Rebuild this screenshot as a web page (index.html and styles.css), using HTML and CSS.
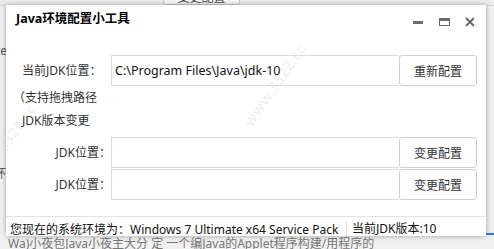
FILE: index.html
```html
<!DOCTYPE html>
<html lang="zh-CN">
<head>
<meta charset="utf-8">
<title>Java环境配置小工具</title>
<link rel="stylesheet" href="styles.css">
</head>
<body>
<div class="desktop">
  <div class="bg-top">
    <span class="bg-btn">变更配置</span>
  </div>
  <div class="bg-left1">te</div>
  <div class="bg-left2">环</div>
  <div class="bg-bottom">Wa)小夜包Java小夜主大分 定 一个编Java的Applet程序构建/用程序的</div>
  <div class="bg-blue"></div>

  <div class="dialog">
    <div class="titlebar">
      <span class="title">Java环境配置小工具</span>
      <div class="controls">
        <span class="ctl ctl-min"></span>
        <span class="ctl ctl-max"></span>
        <svg class="ctl-close" width="10" height="10" viewBox="0 0 10 10"><path d="M1 1L9 9M9 1L1 9" stroke="#6b6b6b" stroke-width="2" fill="none"/></svg>
      </div>
    </div>
    <div class="body">
      <div class="row">
        <span class="label label-left">当前JDK位置<span class="colon">：</span></span>
        <div class="input">C:\Program Files\Java\jdk-10</div>
        <button class="btn">重新配置</button>
      </div>
      <div class="note note1">（支持拖拽路径</div>
      <div class="note note2">JDK版本变更</div>
      <div class="rows2">
        <div class="row">
          <span class="label label-right">JDK位置<span class="colon">：</span></span>
          <div class="input"></div>
          <button class="btn">变更配置</button>
        </div>
        <div class="row">
          <span class="label label-right">JDK位置<span class="colon">：</span></span>
          <div class="input"></div>
          <button class="btn">变更配置</button>
        </div>
      </div>
    </div>
    <div class="status">
      <span class="seg seg1">您现在的系统环境为<span class="colon">：</span>Windows 7 Ultimate x64 Service Pack</span>
      <span class="seg seg2">当前JDK版本:10</span>
    </div>
    <div class="wm wm1">www.3322.cc</div>
    <div class="wm wm2">www.3322.cc</div>
  </div>
</div>
</body>
</html>
```
FILE: styles.css
```css
* { box-sizing: border-box; }
html, body { margin: 0; padding: 0; }
body {
  width: 494px;
  height: 249px;
  overflow: hidden;
  background: #f0f0f0;
  font-family: "Noto Sans", "Noto Sans CJK SC", sans-serif;
  font-size: 12px;
  color: #333;
}
.desktop { position: relative; width: 494px; height: 249px; overflow: hidden; }
.bg-top {
  height: 6px;
  border-bottom: 1px solid #d6d6d6;
  background: #ececec;
  position: relative;
}
.bg-btn {
  position: absolute;
  left: 163px; top: -10px;
  width: 77px; height: 15px;
  border: 1px solid #c8c8c8;
  border-radius: 3px;
  background: #f7f7f7;
  text-align: center;
  line-height: 14px;
  font-size: 12px;
  color: #444;
  overflow: hidden;
}
.bg-left1 { position: absolute; left: -4px; top: 42px; font-size: 12px; color: #555; }
.bg-left2 { position: absolute; left: -6px; top: 164px; font-size: 12px; color: #555; }
.bg-bottom { position: absolute; left: 8px; top: 237px; font-size: 12px; line-height: 14px; color: #777; white-space: nowrap; }
.bg-blue { position: absolute; left: 486px; top: 233px; width: 8px; height: 2px; background: #2f7fd0; }

.dialog {
  position: absolute;
  left: 6px; top: 5px;
  width: 480px; height: 231px;
  background: #fff;
  box-shadow: 0 0 5px rgba(0,0,0,0.35);
  display: flex;
  flex-direction: column;
  overflow: hidden;
}
.titlebar {
  height: 27px;
  flex: none;
  display: flex;
  align-items: center;
  justify-content: space-between;
  padding: 0 11px 0 10px;
}
.title {
  font-weight: bold;
  font-size: 12.5px;
  color: #000;
  line-height: 16px;
}
.controls { display: flex; align-items: center; padding-top: 6px; }
.ctl { display: block; }
.ctl-min { width: 10px; height: 3px; background: #6b6b6b; margin-right: 16px; margin-top: 1px; }
.ctl-max { width: 11px; height: 8px; border: 1.5px solid #6b6b6b; border-top-width: 3px; margin-right: 15px; }
.ctl-close { display: block; }

.colon { font-family: "Noto Sans CJK TC", sans-serif; }

.body { flex: 1; padding-top: 23px; }
.row {
  display: grid;
  grid-template-columns: 105px 288px 78px;
  height: 31px;
  align-items: center;
}
.label { font-size: 12px; color: #333; line-height: 16px; white-space: nowrap; }
.label-left { padding-left: 16px; }
.label-right { text-align: right; }
.input {
  height: 31px;
  border: 1px solid #dcdcdc;
  border-right: none;
  padding: 0 3px;
  line-height: 29px;
  font-size: 12.5px;
  color: #111;
  white-space: nowrap;
  overflow: hidden;
}
.btn {
  height: 31px;
  border: 1px solid #cfcfcf;
  border-radius: 3px;
  background: #fff;
  font-family: inherit;
  font-size: 12px;
  color: #333;
  padding: 0;
}
.note { font-size: 12px; line-height: 16px; color: #333; }
.note1 { margin-top: 4px; padding-left: 7px; }
.note2 { margin-top: 7px; padding-left: 16px; }
.rows2 { margin-top: 8px; display: flex; flex-direction: column; gap: 1px; }

.status {
  flex: none;
  height: 20px;
  border-top: 1px solid #e3e3e3;
  display: flex;
  align-items: flex-start;
  padding-top: 4px;
  font-size: 12px;
  color: #111;
  line-height: 15px;
}
.seg1 { padding-left: 4px; width: 341px; border-right: 1px solid #dde6ee; white-space: nowrap; }
.seg2 { padding-left: 5px; white-space: nowrap; }

.wm {
  position: absolute;
  font-size: 15px;
  font-weight: bold;
  color: rgba(0,0,0,0.06);
  transform: rotate(-55deg);
  white-space: nowrap;
  pointer-events: none;
}
.wm1 { left: -50px; top: 130px; }
.wm2 { left: 220px; top: 70px; }
```
